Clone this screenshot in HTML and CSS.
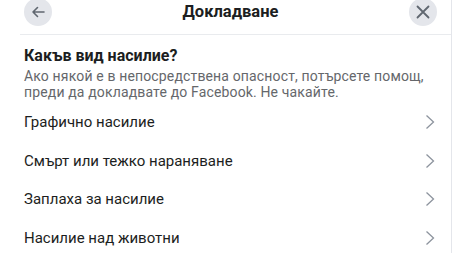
FILE: index.html
```html
<!DOCTYPE html>
<html lang="bg">
<head>
<meta charset="utf-8">
<link rel="stylesheet" href="styles.css">
</head>
<body>
<div class="panel">
  <header class="header">
    <button class="circle-btn" aria-label="Назад">
      <svg width="16" height="16" viewBox="0 0 16 16"><path d="M14 8H3M7.5 3.5L3 8l4.5 4.5" fill="none" stroke="#606770" stroke-width="1.6" stroke-linecap="round" stroke-linejoin="round"/></svg>
    </button>
    <h1 class="title">Докладване</h1>
    <button class="circle-btn" aria-label="Затвори">
      <svg width="16" height="16" viewBox="0 0 16 16"><path d="M2.5 2.5l11 11M13.5 2.5l-11 11" fill="none" stroke="#606770" stroke-width="1.8" stroke-linecap="round"/></svg>
    </button>
  </header>
  <section class="intro">
    <h2 class="question">Какъв вид насилие?</h2>
    <p class="note">Ако някой е в непосредствена опасност, потърсете помощ, преди да докладвате до Facebook. Не чакайте.</p>
  </section>
  <ul class="options">
    <li class="option"><span>Графично насилие</span><svg class="chev" width="10" height="16" viewBox="0 0 10 16"><path d="M1.5 1.5L8.5 8l-7 6.5" fill="none" stroke="#8d949e" stroke-width="1.3"/></svg></li>
    <li class="option"><span>Смърт или тежко нараняване</span><svg class="chev" width="10" height="16" viewBox="0 0 10 16"><path d="M1.5 1.5L8.5 8l-7 6.5" fill="none" stroke="#8d949e" stroke-width="1.3"/></svg></li>
    <li class="option"><span>Заплаха за насилие</span><svg class="chev" width="10" height="16" viewBox="0 0 10 16"><path d="M1.5 1.5L8.5 8l-7 6.5" fill="none" stroke="#8d949e" stroke-width="1.3"/></svg></li>
    <li class="option"><span>Насилие над животни</span><svg class="chev" width="10" height="16" viewBox="0 0 10 16"><path d="M1.5 1.5L8.5 8l-7 6.5" fill="none" stroke="#8d949e" stroke-width="1.3"/></svg></li>
  </ul>
</div>
</body>
</html>
```
FILE: styles.css
```css
html, body {
  margin: 0;
  padding: 0;
  background: #fff;
  overflow: hidden;
}
body {
  font-family: Roboto, "Noto Sans", sans-serif;
  color: #1c1e21;
  height: 255px;
}
.panel {
  width: 452px;
  height: 255px;
  border-right: 1px solid #e4e6eb;
  box-sizing: border-box;
}
.header {
  display: flex;
  align-items: center;
  margin: -2px 0 0 20px;
  padding: 0 14px 8px 4px;
  border-bottom: 1px solid #e9ebee;
}
.circle-btn {
  width: 28px;
  height: 28px;
  border-radius: 50%;
  border: 0;
  padding: 0;
  background: #e4e6eb;
  display: flex;
  align-items: center;
  justify-content: center;
  flex: none;
}
.title {
  flex: 1;
  margin: 0;
  text-align: center;
  font-size: 16.5px;
  font-weight: 700;
  line-height: 20px;
}
.intro {
  padding: 10px 0 0 24px;
}
.question {
  margin: 0;
  font-size: 16px;
  font-weight: 700;
  line-height: 22px;
}
.note {
  margin: 1px 0 0;
  font-size: 14px;
  line-height: 16px;
  color: #65676b;
  letter-spacing: 0.15px;
  width: 410px;
}
.options {
  list-style: none;
  margin: 3px 0 0;
  padding: 0 16px 0 24px;
}
.option {
  display: flex;
  align-items: center;
  justify-content: space-between;
  height: 38.5px;
  font-size: 15px;
}
.chev {
  flex: none;
}
```
